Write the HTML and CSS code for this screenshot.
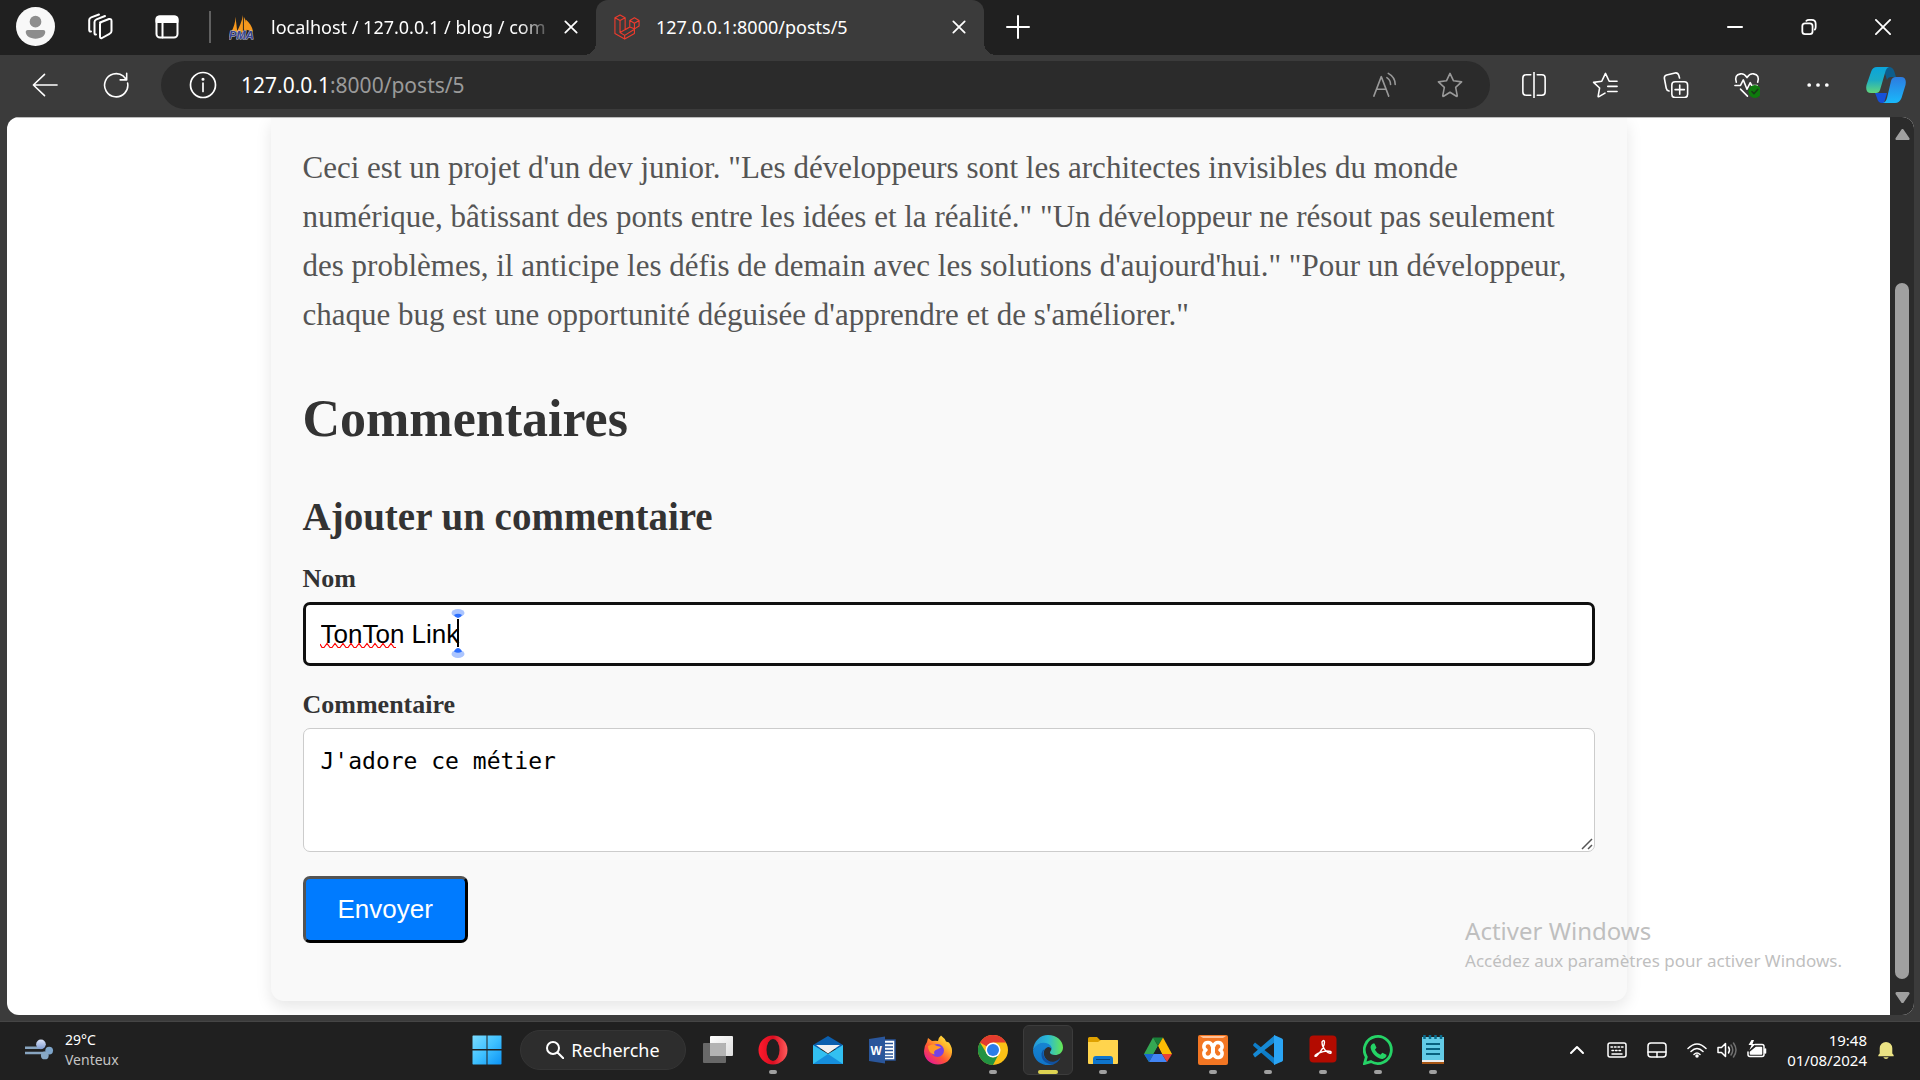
FILE: index.html
```html
<!DOCTYPE html>
<html lang="fr">
<head>
<meta charset="utf-8">
<title>127.0.0.1:8000/posts/5</title>
<meta name="viewport" content="width=device-width, initial-scale=1">
<link rel="stylesheet" href="styles.css">
</head>
<body>
<header class="tabstrip">
  <button class="profile" aria-label="Profil"><svg viewBox="0 0 40 40"><circle cx="20" cy="20" r="20" fill="#f8f8f8"/><circle cx="20" cy="15" r="6" fill="#8d8d8d"/><path d="M12 23.500h16a2 2 0 0 1 2 2c0 4-4 7-10 7s-10-3-10-7a2 2 0 0 1 2-2z" fill="#8d8d8d"/></svg></button>
  <button class="strip-btn" aria-label="Espaces de travail"><svg viewBox="0 0 28 28" class="line"><path d="M15 9.500 24 6q2.500-.6 2.500 2v10q0 2-2 2.800L17 25q-2 .6-2-1.500V11q0-1.500 2-2.200"/><path d="M11 21.500q-1.500.3-1.500-1.500V9q0-1.800 2-2.600L20 3"/><path d="M6 18.500q-1.800.3-1.800-1.800V7q0-1.800 2-2.600L14 1.500"/></svg></button>
  <button class="strip-btn" aria-label="Actions d'onglet"><svg viewBox="0 0 28 28" class="line"><rect x="3.500" y="3.500" width="21" height="21" rx="3.500"/><path d="M3.500 9V6q0-2.500 3-2.500h15q3 0 3 2.500v3z" fill="#fff"/><path d="M9.500 9v15.500"/></svg></button>
  <span class="strip-sep"></span>
  <div class="tab">
    <svg class="favicon" viewBox="0 0 28 28"><path d="M2 20C5 15 7 9 7 3l2 17zM8 20c3-6 6-12 7-19v19zM16 3c3 5 3 10 3 15l-3-1zM18 6c4 3 7 8 8 13l-7-2z" fill="#f7981d"/><text x="0" y="27" class="pma">PMA</text></svg>
    <span class="tab-title fade">localhost / 127.0.0.1 / blog / com</span>
    <button class="tab-close" aria-label="Fermer l'onglet"><svg viewBox="0 0 16 16" class="line"><path d="m1.500 1.500 13 13m0-13-13 13"/></svg></button>
  </div>
  <div class="tab active">
    <svg class="favicon" viewBox="0 0 28 28" fill="none" stroke="#ef3b2d" stroke-width="1.200" stroke-linejoin="round"><path d="M1 4l5.500-3 5.500 3v13l5-3V7l5-3 5 3v6l-5 3v5l-10.500 6L1 21zM1 4l5.500 3L12 4M6.500 7v13l5 3 10.500-6.500M6.500 20 17 14M11.500 23v4M17 7l5 3 5-3M22 10v6l-5-2"/></svg>
    <span class="tab-title">127.0.0.1:8000/posts/5</span>
    <button class="tab-close" aria-label="Fermer l'onglet"><svg viewBox="0 0 16 16" class="line"><path d="m1.500 1.500 13 13m0-13-13 13"/></svg></button>
  </div>
  <button class="new-tab" aria-label="Nouvel onglet"><svg viewBox="0 0 24 24" class="line"><path d="M12 1v22M1 12h22"/></svg></button>
  <div class="window-btns">
    <button aria-label="Réduire"><svg viewBox="0 0 18 18" class="line"><path d="M1 9h16"/></svg></button>
    <button aria-label="Restaurer"><svg viewBox="0 0 18 18" class="line"><rect x="1.500" y="5" width="11.500" height="12" rx="3"/><path d="M6 2q1-1 3-1h3q4.500 0 4.500 4.500V9q0 2-1 3"/></svg></button>
    <button aria-label="Fermer"><svg viewBox="0 0 18 18" class="line"><path d="m1 1 16 16m0-16L1 17"/></svg></button>
  </div>
</header>

<nav class="toolbar" aria-label="Navigation">
  <button class="tool" aria-label="Précédent"><svg viewBox="0 0 28 28" class="line"><path d="M27 14H1.500M13.500 2.500 1.500 14l12 11.500"/></svg></button>
  <button class="tool" aria-label="Actualiser"><svg viewBox="0 0 28 28" class="line"><path d="M26.500 12A12.500 12.500 0 1 1 22 4.500l3.500 4M25.500 1.500v7h-7"/></svg></button>
  <div class="address">
    <svg viewBox="0 0 28 28" class="line info"><circle cx="14" cy="14" r="12.500"/><path d="M14 12v8.500"/><circle cx="14" cy="8.200" r=".7" fill="#fff"/></svg>
    <a class="url" href="#">127.0.0.1<span>:8000/posts/5</span></a>
    <button class="tool dim" aria-label="Lecture à voix haute"><svg viewBox="0 0 28 28" class="line"><path d="M2 26 10 5l8 21M5 18.500h10M16 6q4 2.500 4 7.500M17.500 1.500q7.500 4 7.500 12"/></svg></button>
    <button class="tool dim" aria-label="Ajouter aux favoris"><svg viewBox="0 0 28 28" class="line"><path d="m14 1.500 3.800 8 8.700 1.100-6.400 6 1.700 8.900q.1 1-.9.600L14 21.800l-6.900 4.300q-1 .4-.9-.6l1.700-8.900-6.400-6 8.700-1.100z"/></svg></button>
  </div>
  <div class="actions">
    <button class="tool" aria-label="Fractionner l'écran"><svg viewBox="0 0 28 28" class="line"><path d="M14 0v28M10.500 3H5.500Q2 3 2 6.500v15Q2 25 5.500 25h5M17.500 3h5Q26 3 26 6.500v15q0 3.500-3.500 3.500h-5"/></svg></button>
    <button class="tool" aria-label="Favoris"><svg viewBox="0 0 28 28" class="line"><path d="M27 10h-8.500L14.500 1.500 10.500 10l-8.800 1.200 6.500 6-1.600 9q.1.800.9.300l6.500-3.800M17 15.500h10M17 21h10"/></svg></button>
    <button class="tool" aria-label="Collections"><svg viewBox="0 0 28 28" class="line"><rect x="9.500" y="10.500" width="17" height="17" rx="3.500"/><path d="M18 14v10M13 19h10M6.500 20.500Q4 20 3.500 17.500L1.500 7q-.4-3 2.500-3.700L13 1q3-.5 4 2.500l.8 3"/></svg></button>
    <button class="tool" aria-label="Performances"><svg viewBox="0 0 28 28" class="line"><path d="M2.500 11Q0 3 7 2q4-.5 7 4 3-4.500 7-4 7 1 4.500 9M1 14.500h6l3-6 4 10 3.500-7 1.500 3h6M7 18.500l7.500 7.500"/><circle cx="22.500" cy="21" r="7" fill="#0e7a0d" stroke="none"/><path d="m19.300 21 2.200 2.300 4-4.500" stroke="#173c17"/></svg></button>
    <button class="tool" aria-label="Paramètres et plus"><svg viewBox="0 0 28 28" fill="#fff"><circle cx="4.500" cy="14" r="2"/><circle cx="14" cy="14" r="2"/><circle cx="23.500" cy="14" r="2"/></svg></button>
    <button class="copilot" aria-label="Copilot"><svg viewBox="0 0 40 36">
      <defs><linearGradient id="cpa" x1="0" y1="0" x2="0" y2="1"><stop stop-color="#0aa5dc"/><stop offset=".5" stop-color="#1cabc4"/><stop offset="1" stop-color="#62d67c"/></linearGradient><linearGradient id="cpb" x1="0" y1="0" x2="0" y2="1"><stop stop-color="#2d7be0"/><stop offset="1" stop-color="#19b9fb"/></linearGradient></defs>
      <path d="M17 0h6q4 0 5.500 5l1.500 5h-5q-3 0-4 3z" fill="#0d5d8c"/><path d="M9 26h12l-3 10h-2q-4 0-5-5z" fill="#1650d8"/>
      <path d="M11 0h12q-3 1-4 6l-5 17q-1 3-4 3H5q-6 0-4.500-8L5 5q1.500-5 6-5z" fill="url(#cpa)"/><path d="M29 36H17q3-1 4-5l4-17q1-4 5-4h5q6 0 4.500 8l-4 13q-2 5-6.500 5z" fill="url(#cpb)"/></svg></button>
  </div>
</nav>

<section class="viewport">
  <main class="page">
    <article class="card">
      <p class="post">Ceci est un projet d'un dev junior. "Les développeurs sont les architectes invisibles du monde numérique, bâtissant des ponts entre les idées et la réalité." "Un développeur ne résout pas seulement des problèmes, il anticipe les défis de demain avec les solutions d'aujourd'hui." "Pour un développeur, chaque bug est une opportunité déguisée d'apprendre et de s'améliorer."</p>
      <h2>Commentaires</h2>
      <h3>Ajouter un commentaire</h3>
      <form class="comment-form">
        <label for="nom">Nom</label>
        <div class="field">
          <input id="nom" type="text" value="TonTon Link" spellcheck="false">
          <svg class="cursor-marks" viewBox="0 0 146 52"><path d="M0 35l2 3.500h2l3-4 3 4h2l3-4 3 4h2l3-4 3 4h2l3-4 3 4h2l3-4 3 4h2l3-4 3 4h2l3-4 3 4h2l3-4 3 4h2l3-4 3 4h2" fill="none" stroke="#f00" stroke-width="1.200"/><path d="M138 10v28" stroke="#000" stroke-width="2"/><ellipse cx="138" cy="4" rx="6.500" ry="4" fill="#abc5ff"/><path d="M134 6q4-2.500 8 0-1.500 3-4 3t-4-3z" fill="#2d70ff"/><ellipse cx="138" cy="45" rx="6.500" ry="4" fill="#abc5ff"/><path d="M134 42.500q4 2.500 8 0-1.500-3.500-4-3.500t-4 3.500z" fill="#2d70ff"/></svg>
        </div>
        <label for="texte">Commentaire</label>
        <div class="field">
          <textarea id="texte" spellcheck="false">J'adore ce métier</textarea>
          <svg class="grip" viewBox="0 0 12 12"><path d="M1 11 11 1M7 11l4-4" stroke="#555" stroke-width="1.500"/></svg>
        </div>
        <button type="button" class="send">Envoyer</button>
      </form>
    </article>
    <aside class="watermark"><strong>Activer Windows</strong><span>Accédez aux paramètres pour activer Windows.</span></aside>
  </main>
  <div class="scrollbar">
    <svg viewBox="0 0 16 12"><path d="M8 1.500 14 10.500H2z" fill="#a0a0a0" stroke="#a0a0a0" stroke-width="3" stroke-linejoin="round"/></svg>
    <div class="track"><div class="thumb"></div></div>
    <svg viewBox="0 0 16 12"><path d="M8 10.500 14 1.500H2z" fill="#a0a0a0" stroke="#a0a0a0" stroke-width="3" stroke-linejoin="round"/></svg>
  </div>
</section>

<footer class="taskbar">
  <div class="weather">
    <svg viewBox="0 0 30 22"><defs><linearGradient id="wg" x1="0" y1="0" x2="0" y2="1"><stop stop-color="#dce4fa"/><stop offset="1" stop-color="#7e9bd0"/></linearGradient></defs><path d="M0 9h18M0 14.500h22" stroke="#88a5c0" stroke-width="2.500"/><circle cx="16.500" cy="5.500" r="5" fill="url(#wg)"/><circle cx="25" cy="12" r="4" fill="#7ea5ca"/><circle cx="20.500" cy="17" r="4" fill="#88a9c6"/></svg>
    <div><span>29°C</span><small>Venteux</small></div>
  </div>
  <div class="apps">
    <button class="app" aria-label="Démarrer"><svg viewBox="0 0 30 30"><defs><linearGradient id="win" x1="0" y1="0" x2="1" y2="1"><stop stop-color="#7bdcff"/><stop offset=".5" stop-color="#3fc1ff"/><stop offset="1" stop-color="#0c93f5"/></linearGradient></defs><path d="M1 .5h13.500V14H.5V1zM15.500.5H29L29.500 1v13h-14zM.5 15.500h14v14H1l-.5-.5zM15.500 15.500h14V29l-.5.5H15.500z" fill="url(#win)"/></svg></button>
    <button class="search"><svg viewBox="0 0 18 18" class="line"><circle cx="7" cy="7" r="6"/><path d="m11.500 11.500 6 6"/></svg>Recherche</button>
    <button class="app" aria-label="Vue des tâches"><svg viewBox="0 0 30 30"><defs><linearGradient id="tv" x1="0" y1="0" x2="1" y2="1"><stop stop-color="#fff"/><stop offset="1" stop-color="#ddd"/></linearGradient></defs><rect x="7" y="1" width="23" height="20" rx="1" fill="url(#tv)"/><rect y="8" width="23" height="20" rx="1" fill="#686868"/><path d="M7 8h15q1 0 1 1v12H7z" fill="#b4b4b4"/></svg></button>
    <button class="app run" aria-label="Opera"><svg viewBox="0 0 30 30"><defs><linearGradient id="op"><stop stop-color="#ff1b2d"/><stop offset=".5" stop-color="#d90d20"/><stop offset="1" stop-color="#ff5c5c"/></linearGradient></defs><ellipse cx="15" cy="15" rx="14.500" ry="14.500" fill="url(#op)"/><ellipse cx="15" cy="15" rx="6.500" ry="11" fill="#202020"/></svg></button>
    <button class="app" aria-label="Courrier"><svg viewBox="0 0 30 30"><path d="M0 10 15 1l15 9v4H0z" fill="#0b5fae"/><path d="M0 10 15 19 30 10v19H0z" fill="#32c0f1"/><path d="m15 19 15 10H0z" fill="#168fdd"/><path d="M3 10h24L15 18.500z" fill="#f1f1f1"/></svg></button>
    <button class="app" aria-label="Word"><svg viewBox="0 0 30 30"><path d="M14 5h13v20H14z" fill="#fff" stroke="#2a569b" stroke-width="1.500"/><path d="M17 8.500h8M17 12h8M17 15.500h8M17 19h8M17 22h8" stroke="#2a569b" stroke-width="1.500"/><path d="M1 4 17 1.500v27L1 26z" fill="#2a569b"/><text x="2.500" y="20" class="word-mark">W</text></svg></button>
    <button class="app" aria-label="Firefox"><svg viewBox="0 0 30 30"><defs><linearGradient id="ff" x1="1" y1="0" x2=".2" y2="1"><stop stop-color="#fff44f"/><stop offset=".35" stop-color="#ffb429"/><stop offset=".65" stop-color="#ff5435"/><stop offset="1" stop-color="#e3159a"/></linearGradient></defs><path d="M18 .5q4 3 5 6l3 1q3.500 5 3 10c-.5 7-6 12-14 12S1 24 1 16q0-5 3-9l1-4 4 3q4-.5 6 0 0-3 3-5.500z" fill="url(#ff)"/><circle cx="14.500" cy="15.500" r="6.500" fill="#7542e5"/><path d="M5 11q5-3 9 0 3 0 4 1.500l-4 2q-4 1-2.500 5Q5 18 5 11z" fill="#ff9a28"/></svg></button>
    <button class="app run" aria-label="Chrome"><svg viewBox="0 0 30 30"><circle cx="15" cy="15" r="15" fill="#fbc116"/><path d="M15 15 2 7.500A15 15 0 0 1 28 7.500H15z" fill="#e33b2e"/><path d="M15 30A15 15 0 0 1 2 7.500l7 11.500 6 3.500 5.500-3z" fill="#229342"/><circle cx="15" cy="15" r="7.500" fill="#fff"/><circle cx="15" cy="15" r="6" fill="#2b7de9"/></svg></button>
    <button class="app current" aria-label="Edge"><svg viewBox="0 0 30 30"><defs><linearGradient id="eg"><stop stop-color="#2494d7"/><stop offset=".5" stop-color="#2bb9d5"/><stop offset="1" stop-color="#67e951"/></linearGradient><linearGradient id="eb" x1="0" y1="0" x2="0" y2="1"><stop stop-color="#1684d1"/><stop offset="1" stop-color="#1074c8"/></linearGradient></defs><path d="M0 15C1 6 7 0 15 0c9 0 15 6 15 12.500 0 5-4 7.500-8 7.500-3 0-5-1-5-2.500S20 15 17 11Q8 4 0 15z" fill="url(#eg)"/><path d="M0 15Q5 6 13 8q6 1.500 6 7-1-3-4-3-5 2-4 8c1 4 4 7 10 9-9 4-21-2-21-14z" fill="url(#eb)"/><path d="M11.500 14c-4 7 3 14 10 12.500q4-1 6-4-2 5.500-8 7.200Q8 28 8.500 18.500 9 15 11.500 14z" fill="#11519f"/></svg></button>
    <button class="app run" aria-label="Explorateur de fichiers"><svg viewBox="0 0 30 30"><path d="M0 3.500Q0 2 1.500 2H9l3 3h17q1 0 1 1v9H0z" fill="#dfa100"/><path d="M0 7h10l3-2h16q1 0 1 1v22q0 1-1 1H1q-1 0-1-1z" fill="#ffd44d"/><path d="M5 29v-5q0-3 3-3h14q3 0 3 3v5z" fill="#0f75cc"/><path d="M8 24.500h14" stroke="#07437d"/></svg></button>
    <button class="app" aria-label="Google Drive"><svg viewBox="0 0 30 30"><path d="M10 2.500h10l-5 8z" fill="#188038"/><path d="m10 2.500 5 8.500L6 27l-5-8z" fill="#34a853"/><path d="m20 2.500 9 16.500H19l-4-8z" fill="#fbbc04"/><path d="M10.500 19H19l5 8H6z" fill="#4285f4"/><path d="M19 19h10l-5 8z" fill="#ea4335"/><path d="M1 19h9.500L6 27z" fill="#1967d2"/><path d="m15 11 4 8h-8.500z" fill="#202020"/></svg></button>
    <button class="app run" aria-label="XAMPP"><svg viewBox="0 0 30 30"><rect width="30" height="30" rx="2" fill="#f37623"/><path d="M2 1h26l-3 2H5z" fill="#ffc198"/><path d="M15 12.500c-1-1-.5-5-5-5S4.500 13 8 15c-3.500 2-2.500 7.500 2 7.500s4-4 5-5c1 1 .5 5 5 5s5.500-5.500 2-7.500c3.500-2 2.500-7.500-2-7.500s-4 4-5 5z" fill="none" stroke="#fff" stroke-width="3.500" stroke-linejoin="round"/><path d="M13 15h4" stroke="#fff" stroke-width="4"/></svg></button>
    <button class="app run" aria-label="Visual Studio Code"><svg viewBox="0 0 30 30"><path d="m2 7.500 20 16v6.500L.5 11q-.8-1 0-1.800z" fill="#0e7dc8"/><path d="M2 22.500 22 7V0L.5 18.500q-.8 1 0 1.800z" fill="#1689d4"/><path d="m21 0 8 3.500q1 .5 1 1.500v20q0 1-1 1.500L21 30z" fill="#2aa4f4"/></svg></button>
    <button class="app run" aria-label="Acrobat"><svg viewBox="0 0 30 30"><rect x="1.500" y=".5" width="27" height="27" rx="4" fill="#b30b00"/><path d="M14 7q2-3 2.500 0 0 6-8 14-2.500 1-1-1Q11 17 19 16q5 0 4 2-2 1-5-2-4-4-4-9z" fill="none" stroke="#fff" stroke-width="1.400"/></svg></button>
    <button class="app run" aria-label="WhatsApp"><svg viewBox="0 0 30 30"><path d="M1.500 28.500 3.300 22A13.500 13.500 0 1 1 8 26.600z" fill="none" stroke="#25d366" stroke-width="2.800"/><path d="M10 8.500h1.500l2 4.200-1.600 2.100q2 3.500 5.500 5l2-2 4 2v1.500q-1.500 3-4.400 2.700C13 23 8 17.500 7.500 12q.3-2.500 2.500-3.500z" fill="#25d366"/></svg></button>
    <button class="app run" aria-label="Bloc-notes"><svg viewBox="0 0 30 30"><path d="M4 2h22v24H4z" fill="#63cbe6"/><path d="M4 25.500h22V29H4z" fill="#a75614"/><path d="M4 25h22v2H4z" fill="#eee"/><path d="M6.500 0v4M12 0v4M17.500 0v4M23 0v4" stroke="#0a6b8c" stroke-width="2.500"/><path d="M8 9h14M8 14h14M8 19h14" stroke="#08617f" stroke-width="2"/></svg></button>
  </div>
  <div class="tray">
    <svg viewBox="0 0 20 20" class="line"><path d="m4 13 6-6 6 6" stroke-width="2"/></svg>
    <svg viewBox="0 0 20 20" class="line"><rect x="1" y="3" width="18" height="14" rx="2"/><path d="M4 7h12M5 10.500h10" stroke-dasharray="1.500 2"/><path d="M5 14h10"/></svg>
    <svg viewBox="0 0 20 20" class="line"><rect x="1" y="3" width="18" height="14" rx="3"/><path d="M1 12h18M10 12v5"/></svg>
    <div class="status">
      <svg viewBox="0 0 20 20" class="line"><path d="M1 8.500q9-9 18 0M4 11.500q6-6 12 0M7 14.500q3-3 6 0"/><circle cx="10" cy="16" r="1" fill="#fff"/></svg>
      <svg viewBox="0 0 20 20" class="line"><path d="M1 7.500h3.500l4-4v13l-4-4H1z"/><path d="M11.500 7q2 3 0 6"/><path d="M14 5q3.500 5 0 10M16.500 3q5 7 0 14" stroke="#707070"/></svg>
      <svg viewBox="0 0 20 20" class="line"><path d="M8 4.500h7q2 0 2 2v8q0 2-2 2H3q-2 0-2-2V12M18.500 9v4"/><path d="M9 7.500h5.500V14h-11v-2z" fill="#fff"/><path d="M4.500 0 1.500 5h3l-2 5 6-6h-3l1.500-4z" fill="#fff" stroke="none"/></svg>
    </div>
    <time datetime="2024-08-01T19:48">19:48<br>01/08/2024</time>
    <svg viewBox="0 0 20 20" class="bell"><path d="M3 14V8a7 7 0 0 1 14 0v6l1.500 1.500V17h-17v-1.500zM7 18h6q-1 2-3 2t-3-2z" fill="#ebe384"/></svg>
  </div>
</footer>
</body>
</html>
```
FILE: styles.css
```css
* {
  box-sizing: border-box;
}

body {
  margin: 0;
  min-height: 100vh;
  display: flex;
  flex-direction: column;
  background: #3b3b3b;
  color: #fff;
  font-family: "Noto Sans", "Open Sans", sans-serif;
}

button {
  margin: 0;
  padding: 0;
  border: 0;
  background: none;
  color: #fff;
  font-family: inherit;
}

svg {
  display: block;
  flex: none;
}

.line {
  fill: none;
  stroke: #fff;
  stroke-width: 2;
  stroke-linecap: round;
  stroke-linejoin: round;
}

/* Tab strip */
.tabstrip {
  display: flex;
  align-items: center;
  height: 55px;
  padding: 0 0 2px 16px;
  background: #202020;
}

.profile {
  width: 39px;
  height: 39px;
  margin-right: 30px;
}

.strip-btn {
  width: 28px;
  margin-right: 40px;
}

.strip-btn + .strip-btn {
  margin-right: 28px;
}

.strip-sep {
  width: 2px;
  height: 32px;
  background: #606060;
}

.tab {
  display: flex;
  align-items: center;
  width: 385px;
  height: 53px;
  padding: 0 16px 0 18px;
}

.tab.active {
  position: relative;
  align-self: flex-start;
  width: 388px;
  height: 55px;
  padding-bottom: 2px;
  border-radius: 12px 12px 0 0;
  background: #3b3b3b;
}

.tab.active::before,
.tab.active::after {
  content: "";
  position: absolute;
  bottom: 0;
  width: 12px;
  height: 12px;
}

.tab.active::before {
  right: 100%;
  background: radial-gradient(circle at 0 0, transparent 12px, #3b3b3b 12px);
}

.tab.active::after {
  left: 100%;
  background: radial-gradient(circle at 100% 0, transparent 12px, #3b3b3b 12px);
}

.favicon {
  width: 26px;
  height: 26px;
}

.pma {
  font: italic bold 12px "Liberation Sans", sans-serif;
  fill: #38448e;
  stroke: #c8c8d8;
  stroke-width: 1px;
  paint-order: stroke;
}

.tab-title {
  flex: 1;
  margin: 0 10px 0 16px;
  white-space: nowrap;
  font-size: 18px;
}

.fade {
  mask-image: linear-gradient(to right, #000 88%, transparent);
}

.tab-close {
  width: 14px;
  margin-right: 2px;
}

.new-tab {
  width: 24px;
  margin-left: 22px;
}

.window-btns {
  display: flex;
  gap: 58px;
  margin-left: auto;
  padding-right: 29px;
}

.window-btns svg {
  width: 16px;
}

/* Toolbar */
.toolbar {
  display: flex;
  align-items: center;
  height: 62px;
  padding: 0 14px 2px 32px;
}

.tool {
  width: 26px;
}

.toolbar > .tool {
  margin-right: 45px;
}

.toolbar .line {
  stroke-width: 1.700;
}

.address {
  flex: 1;
  display: flex;
  align-items: center;
  height: 48px;
  margin-right: 31px;
  margin-left: -13px;
  padding: 0 27px 0 28px;
  border-radius: 24px;
  background: #2b2b2b;
}

.info {
  width: 28px;
}

.url {
  flex: 1;
  margin-left: 24px;
  color: #fff;
  font-size: 21px;
  text-decoration: none;
}

.url span {
  color: #9a9a9a;
}

.dim {
  margin-left: 39px;
}

.dim .line {
  stroke: #999;
}

.actions {
  display: flex;
  align-items: center;
  gap: 45px;
}

.copilot {
  width: 40px;
  margin-left: -10px;
}

/* Web page */
.viewport {
  flex: 1;
  display: flex;
  margin: 0 6px 6px 7px;
  border-radius: 12px;
  overflow: hidden;
  background: #fff;
}

.page {
  position: relative;
  flex: 1;
  overflow: hidden;
  border-top: 1px solid #bbb;
}

.card {
  max-width: 1356px;
  margin: 0 auto 13px;
  padding: 25px 32px 58px;
  border-radius: 0 0 13px 13px;
  background: #f9f9f9;
  box-shadow: 0 6px 16px rgba(0, 0, 0, 0.1);
  color: #333;
  font-family: "Liberation Serif", serif;
}

.post {
  margin: 0 0 50px;
  color: #555;
  font-size: 31px;
  line-height: 49px;
}

h2,
h3 {
  margin: 0;
}

h2 {
  margin-bottom: 46px;
  font-size: 52px;
  line-height: 60px;
}

h3 {
  margin-bottom: 25px;
  font-size: 39px;
  line-height: 44px;
}

label {
  display: block;
  margin-bottom: 8px;
  font-size: 26px;
  font-weight: bold;
  line-height: 30px;
}

.field {
  position: relative;
  margin-bottom: 24px;
}

input,
textarea {
  display: block;
  width: 100%;
  margin: 0;
  border-radius: 7px;
  outline: 0;
  background: #fff;
  color: #000;
}

input {
  height: 64px;
  padding: 0 15px;
  border: 3px solid #101010;
  font: 26px "Liberation Sans", sans-serif;
}

.cursor-marks {
  position: absolute;
  top: 7px;
  left: 17px;
  width: 146px;
  height: 52px;
}

textarea {
  height: 124px;
  padding: 17px;
  border: 1px solid #ccc;
  font: 23px/30px "DejaVu Sans Mono", monospace;
  resize: none;
}

.grip {
  position: absolute;
  right: 2px;
  bottom: 2px;
  width: 12px;
}

.send {
  display: block;
  padding: 15px 32px;
  border: 3px outset #000;
  border-radius: 7px;
  background: #007bff;
  font: 26px/31px "Liberation Sans", sans-serif;
}

.watermark {
  position: absolute;
  right: 48px;
  bottom: 40px;
  display: flex;
  flex-direction: column;
  color: #bfbfbf;
}

.watermark strong {
  font-size: 24px;
  font-weight: normal;
  line-height: 32px;
}

.watermark span {
  font-size: 17px;
  line-height: 28px;
}

.scrollbar {
  display: flex;
  flex-direction: column;
  align-items: center;
  width: 24px;
  padding: 12px 0;
  background: #2b2b2b;
}

.scrollbar svg {
  width: 15px;
}

.track {
  flex: 1;
  display: flex;
  align-items: flex-end;
  padding: 0 0 13px;
}

.thumb {
  width: 14px;
  height: 83%;
  border-radius: 7px;
  background: #a0a0a0;
}

/* Taskbar */
.taskbar {
  display: grid;
  grid-template-columns: 1fr auto 1fr;
  align-items: center;
  height: 59px;
  padding-bottom: 2px;
  border-top: 1px solid #454545;
  background: #202020;
}

.weather {
  display: flex;
  align-items: center;
  gap: 11px;
  padding-left: 25px;
}

.weather svg {
  width: 29px;
}

.weather span,
.weather small {
  display: block;
  font-size: 14px;
  line-height: 20px;
}

.weather small {
  color: #c4c4c4;
}

.apps {
  display: flex;
  align-items: center;
  gap: 5px;
}

.app {
  position: relative;
  display: grid;
  place-items: center;
  width: 50px;
  height: 50px;
  border-radius: 6px;
}

.app svg {
  width: 30px;
}

.current {
  border: 1px solid #3c3c3c;
  background: #2e2e2e;
}

.run::after,
.current::after {
  content: "";
  position: absolute;
  bottom: 1px;
  width: 8px;
  height: 4px;
  border-radius: 2px;
  background: #a0a0a0;
}

.current::after {
  bottom: 0;
  width: 20px;
  background: #ddd352;
}

.word-mark {
  font: bold 12px "Liberation Sans", sans-serif;
  fill: #fff;
}

.search {
  display: flex;
  align-items: center;
  justify-content: center;
  gap: 7px;
  width: 166px;
  height: 40px;
  margin: 0 2px 0 3px;
  border: 1px solid #353535;
  border-radius: 20px;
  background: #2d2d2d;
  font-size: 18px;
}

.search svg {
  width: 18px;
}

.tray {
  display: flex;
  align-items: center;
  justify-content: flex-end;
  gap: 20px;
  padding-right: 25px;
}

.tray svg {
  width: 20px;
}

.tray .line {
  stroke-width: 1.500;
}

.status {
  display: flex;
  gap: 10px;
}

.tray time {
  font-size: 15px;
  line-height: 20px;
  text-align: right;
}

.tray .bell {
  width: 18px;
  margin-left: -10px;
}
```
